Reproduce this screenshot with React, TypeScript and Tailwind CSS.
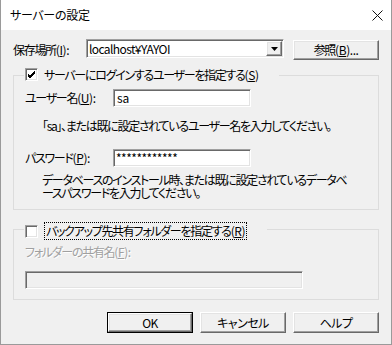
import { ReactNode } from "react"

const sunken = "border border-t-[#a0a0a0] border-l-[#a0a0a0] border-r-white border-b-white shadow-[inset_1px_1px_0_#696969,inset_-1px_-1px_0_#e3e3e3]"
const raised = "border border-t-white border-l-white border-r-[#696969] border-b-[#696969] shadow-[inset_-1px_-1px_0_#a0a0a0,inset_1px_1px_0_#e3e3e3]"

// accelerator key, e.g. (S)
const Key = ({ k, colon }: { k: string, colon?: boolean }) => (
    <span className="tracking-[-0.4px]">(<span className="underline underline-offset-[1px]">{k}</span>){colon ? ":" : ""}</span>
)

const CheckBox = ({ checked }: { checked?: boolean }) => (
    <div className={`w-[13px] h-[13px] bg-white shrink-0 flex items-center justify-center ${sunken}`}>
        {checked && (
            <svg width="9" height="9" viewBox="0 0 9 9">
                <path d="M1 4 L3 6 L8 1 M1 5 L3 7 L8 2 M1 6 L3 8 L8 3" stroke="#000" strokeWidth="1" fill="none" shapeRendering="crispEdges" />
            </svg>
        )}
    </div>
)

const Button = ({ children, primary }: { children: ReactNode, primary?: boolean }) => (
    <div className={`w-[86px] h-[21px] ${primary ? "border border-black" : ""}`}>
        <div className={`w-full h-full flex items-center justify-center bg-[#f0f0f0] ${raised}`}>
            {children}
        </div>
    </div>
)

const GroupBox = ({ legend, children, className }: { legend: ReactNode, children: ReactNode, className: string }) => (
    <div className={`relative border border-[#dcdcdc] ${className}`}>
        <div className="absolute -top-[8px] left-[10px] flex items-center gap-[6px] bg-[#f0f0f0] pl-[1px] pr-[20px]">
            {legend}
        </div>
        {children}
    </div>
)

const App = () => {
    return (
        <div className="w-[392px] h-[345px] flex flex-col bg-[#f0f0f0] border-x border-b border-[#9a9a9a] text-[12px] leading-[12px] text-black whitespace-nowrap [font-family:'Noto_Sans_CJK_JP','Liberation_Sans',sans-serif] [font-feature-settings:'palt']">
            {/* title bar */}
            <div className="h-[30px] bg-white flex items-center justify-between pl-[9px] pr-[8px] shrink-0">
                <span className="tracking-[-0.3px]">サーバーの設定</span>
                <svg width="11" height="11" viewBox="0 0 11 11">
                    <path d="M0.5 0.5 L10.5 10.5 M10.5 0.5 L0.5 10.5" stroke="#111" strokeWidth="1" />
                </svg>
            </div>

            <div className="flex flex-col pl-[12px] pr-[12px] tracking-[-1.3px]">
                {/* location row */}
                <div className="flex items-start mt-[9px]">
                    <div className="w-[73px] h-[19px] pt-[5px]">保存場所<Key k="I" colon /></div>
                    <div className={`w-[198px] h-[19px] bg-white flex items-center justify-between pl-[2px] pr-[1px] ${sunken}`}>
                        <span className="tracking-[-0.6px]">localhost¥YAYOI</span>
                        <div className={`w-[16px] h-[15px] bg-[#f0f0f0] flex items-center justify-center ${raised}`}>
                            <svg width="7" height="4" viewBox="0 0 7 4"><path d="M0 0 H7 L3.5 4 Z" fill="#000" /></svg>
                        </div>
                    </div>
                    <div className="ml-[9px] mt-[1px]">
                        <div className={`w-[86px] h-[20px] flex items-center justify-center bg-[#f0f0f0] ${raised}`}>
                            参照<Key k="B" /><span className="tracking-[-0.5px]">...</span>
                        </div>
                    </div>
                </div>

                {/* login group */}
                <GroupBox
                    className="mt-[15px] h-[135px] w-[366px] pl-[11px] pt-[13px]"
                    legend={<><CheckBox checked /><span>サーバーにログインするユーザーを指定する<Key k="S" /></span></>}
                >
                    <div className="flex items-center">
                        <div className="w-[88px]">ユーザー名<Key k="U" colon /></div>
                        <div className={`w-[138px] h-[18px] bg-white flex items-center pl-[3px] tracking-normal ${sunken}`}>sa</div>
                    </div>
                    <p className="mt-[13px] ml-[17px]">「sa」、または既に設定されているユーザー名を入力してください。</p>
                    <div className="flex items-center mt-[17px]">
                        <div className="w-[88px]">パスワード<Key k="P" colon /></div>
                        <div className={`w-[138px] h-[18px] bg-white flex items-center pl-[2px] tracking-[-0.5px] ${sunken}`}>************</div>
                    </div>
                    <div className="mt-[7px] ml-[17px] flex flex-col gap-[1px]">
                        <span>データベースのインストール時、または既に設定されているデータベ</span>
                        <span>ースパスワードを入力してください。</span>
                    </div>
                </GroupBox>

                {/* backup group */}
                <GroupBox
                    className="mt-[19px] h-[71px] w-[366px] pl-[11px] pt-[16px]"
                    legend={<><CheckBox /><span className="border border-dotted border-black px-[1px] py-[2px]">バックアップ先共有フォルダーを指定する<Key k="R" /></span></>}
                >
                    <div className="text-[#a0a0a0] [text-shadow:1px_1px_0_#fff]">フォルダーの共有名<Key k="F" colon /></div>
                    <div className={`mt-[13px] w-[278px] h-[18px] bg-[#f0f0f0] ${sunken}`} />
                </GroupBox>

                {/* buttons */}
                <div className="flex justify-end gap-[7px] mt-[12px] w-[366px] tracking-[-0.5px]">
                    <Button primary>OK</Button>
                    <Button>キャンセル</Button>
                    <Button>ヘルプ</Button>
                </div>
            </div>
        </div>
    )
}

export default App
